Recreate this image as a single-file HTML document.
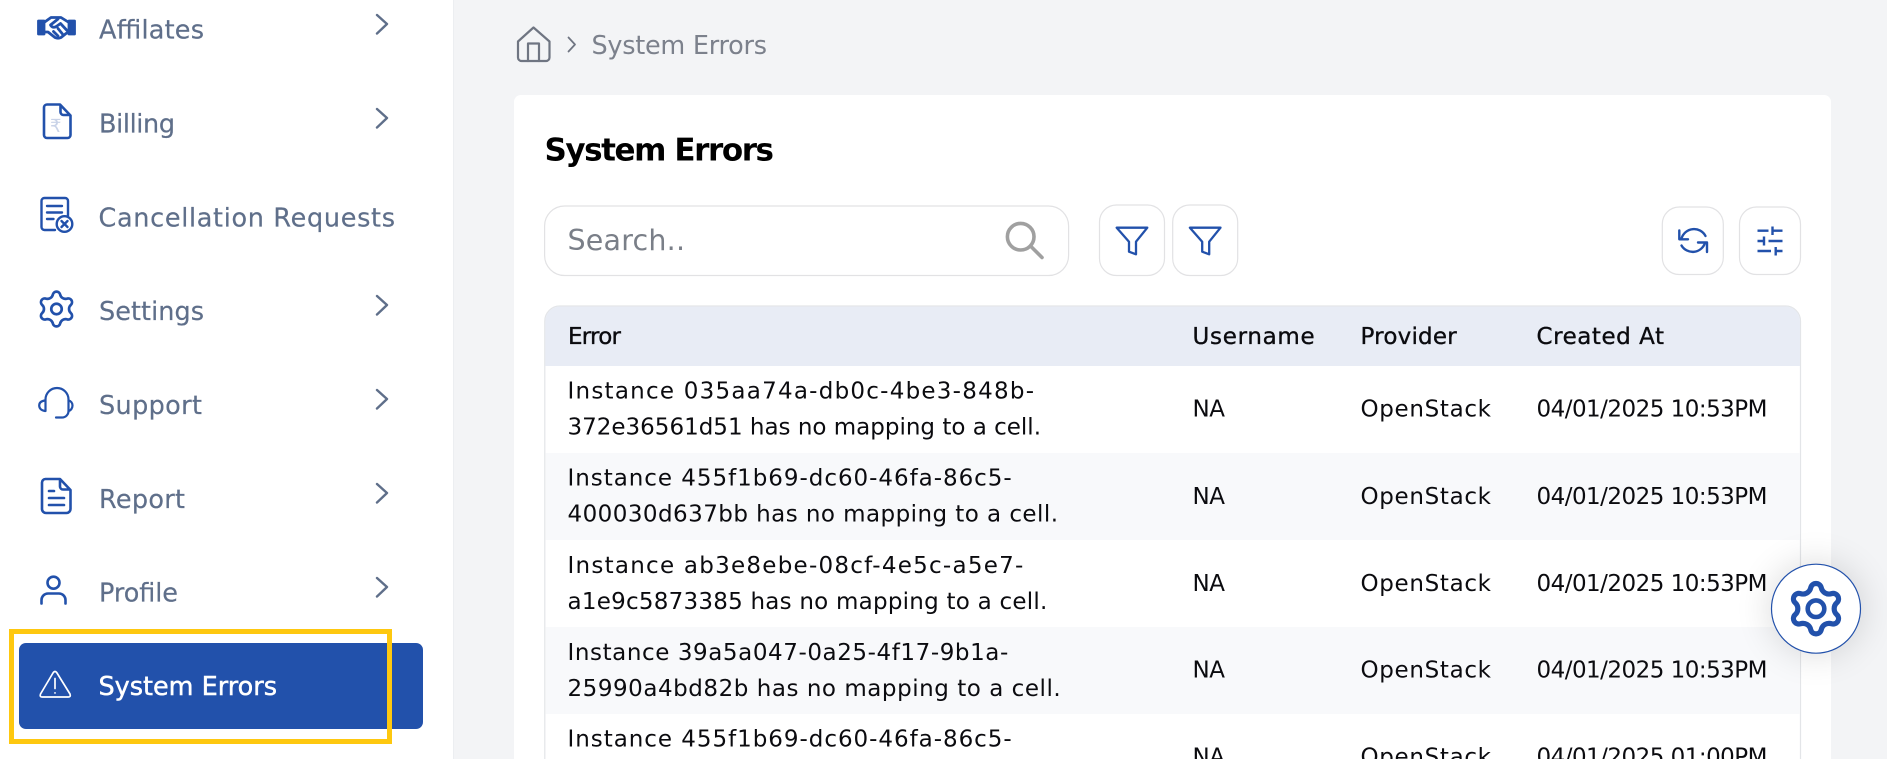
<!DOCTYPE html>
<html lang="en">
<head>
<meta charset="utf-8">
<title>System Errors</title>
<style>
html,body{margin:0;padding:0;width:1887px;height:759px;overflow:hidden;background:#f3f4f6}
svg{display:block}
text{font-family:"DejaVu Sans","Liberation Sans",sans-serif}
.nav{font-size:25.5px;fill:#5f6f8a;stroke:#5f6f8a;stroke-width:.2}
.td{font-size:23px;fill:#0b0b0f}
.th{font-size:23px;fill:#0b0b0f;stroke:#0b0b0f;stroke-width:.35}
.ic{fill:none;stroke:#2251ab;stroke-width:2.6;stroke-linecap:round;stroke-linejoin:round}
.chev{fill:none;stroke:#5f6f8a;stroke-width:2.4;stroke-linecap:round;stroke-linejoin:round}
.btn{fill:#fff;stroke:#e2e2e4;stroke-width:1.2}
</style>
</head>
<body>
<svg width="1887" height="759" viewBox="0 0 1887 759" xmlns="http://www.w3.org/2000/svg">
<defs>
<filter id="sh" x="-60%" y="-60%" width="220%" height="220%"><feGaussianBlur stdDeviation="18"/></filter>
</defs>
<rect width="1887" height="759" fill="#f3f4f6"/>

<!-- sidebar -->
<rect x="0" y="0" width="453" height="759" fill="#fff"/>
<rect x="453" y="0" width="1" height="759" fill="#eceef1"/>

<!-- affiliates icon -->
<g class="ic" style="stroke-width:2.8">
<rect x="38.5" y="21" width="5.5" height="13" fill="#2251ab" stroke="#2251ab"/>
<rect x="69" y="21" width="5.5" height="13" fill="#2251ab" stroke="#2251ab"/>
<path d="M44 22.5L51 17.5H61L69 22.500M44 32H48L55 37.5Q58 39 61 37.5L66 33.5L69 32"/>
<path d="M58 19L50.5 25Q53 29 57 26L60.5 23.5L67.5 31M53.5 31.5L58 36M58 28.5L62.500 34"/>
</g>
<text class="nav" x="99" y="38.7" textLength="105" lengthAdjust="spacing">Affilates</text>
<path class="chev" d="M377 15L387 24L377 33.5"/>

<!-- billing -->
<path class="ic" d="M47 104.5H60L70.5 115.5V135a3 3 0 0 1-3 3H47a3 3 0 0 1-3-3V107.5a3 3 0 0 1 3-3ZM60.5 105V112a3 3 0 0 0 3 3H70"/>
<text x="50" y="132" style="font-size:18px;fill:#c9d3e8">₹</text>
<text class="nav" x="99" y="132.7" textLength="76" lengthAdjust="spacing">Billing</text>
<path class="chev" d="M377 109L387 118L377 127.5"/>

<!-- cancellation -->
<g class="ic" style="stroke-width:2.4">
<path d="M55 230H44.5a3 3 0 0 1-3-3V201a3 3 0 0 1 3-3H65a3 3 0 0 1 3 3V215.5"/>
<path d="M47 206H62M47 212.5H62M47 219H53.5"/>
<circle cx="64.5" cy="224" r="7.8"/>
<path d="M61.5 221L67.5 227M67.5 221L61.5 227"/>
</g>
<text class="nav" x="98.5" y="226.7" textLength="296.5" lengthAdjust="spacing">Cancellation Requests</text>

<!-- settings -->
<g transform="translate(56.5 309) scale(.69)">
<path fill="none" stroke="#2251ab" stroke-width="3.9" stroke-linejoin="round" d="M-5.25-21.06A5.4 5.4 0 0 1 5.25-21.06A8 8 0 0 0 15.61-15.07A5.4 5.4 0 0 1 20.86-5.98A8 8 0 0 0 20.86 5.98A5.4 5.4 0 0 1 15.61 15.07A8 8 0 0 0 5.25 21.06A5.4 5.4 0 0 1-5.25 21.06A8 8 0 0 0-15.61 15.07A5.4 5.4 0 0 1-20.86 5.98A8 8 0 0 0-20.86-5.98A5.4 5.4 0 0 1-15.61-15.07A8 8 0 0 0-5.25-21.06Z"/>
<circle r="7.6" fill="none" stroke="#2251ab" stroke-width="3.9"/>
</g>
<text class="nav" x="99" y="320" textLength="105" lengthAdjust="spacing">Settings</text>
<path class="chev" d="M377 296L387 305L377 314.5"/>

<!-- support -->
<g class="ic" style="stroke-width:2.2">
<path d="M45.5 400V399.5a11.5 11.5 0 0 1 23 0V411a6.5 6.5 0 0 1-6.5 6.5H56"/>
<path d="M45 400.500C41 401 39.200 403 39.200 405.500S41 410.500 45 411"/>
<path d="M45.500 400V411"/>
<path d="M68.500 400.500C71 401 72.500 403 72.500 405.500S71 410.500 68.500 411"/>
</g>
<text class="nav" x="99" y="414" textLength="103" lengthAdjust="spacing">Support</text>
<path class="chev" d="M377 390L387 399L377 408.5"/>

<!-- report -->
<g class="ic">
<path d="M45.5 479H60L70.5 490V509a4 4 0 0 1-4 4H46a4 4 0 0 1-4-4V482.5a3.5 3.5 0 0 1 3.500-3.500ZM60 479.500V486.500a3 3 0 0 0 3 3H70"/>
<path d="M49 491H54M49 498H64M49 505H64"/>
</g>
<text class="nav" x="99" y="508" textLength="86" lengthAdjust="spacing">Report</text>
<path class="chev" d="M377 484L387 493L377 502.500"/>

<!-- profile -->
<g class="ic">
<circle cx="53.500" cy="582.700" r="6"/>
<path d="M41.500 603.500V600a6.500 6.500 0 0 1 6.500-6.500H59a6.500 6.500 0 0 1 6.500 6.500V603.500"/>
</g>
<text class="nav" x="99" y="601.700" textLength="79" lengthAdjust="spacing">Profile</text>
<path class="chev" d="M377 578L387 587L377 596.500"/>

<!-- active -->
<rect x="19" y="643" width="404" height="86" rx="7" fill="#2251ab"/>
<rect x="11.500" y="631.500" width="378" height="110" fill="none" stroke="#fec80f" stroke-width="5"/>
<g fill="none" stroke="#fff" stroke-width="1.700" stroke-linejoin="round" stroke-linecap="round">
<path d="M55 671.500Q54 671.500 53 673L40.500 694Q39.500 697 42 697H68.500Q71 697 70 694L57 673Q56 671.500 55 671.500Z"/>
<path d="M55 678.500V688.500"/>
<path d="M55 692.800V693"/>
</g>
<text x="98.500" y="695" textLength="178.500" lengthAdjust="spacing" style="font-size:25.5px;fill:#fff;stroke:#fff;stroke-width:.45">System Errors</text>

<!-- breadcrumb -->
<g fill="none" stroke="#6f7582" stroke-width="2.200" stroke-linejoin="round" stroke-linecap="round">
<path d="M533.500 27.500L518 41.500V57.500a3.500 3.500 0 0 0 3.500 3.500H546a3.500 3.500 0 0 0 3.500-3.500V41.500Z"/>
<path d="M528 61V43.500H539V61"/>
</g>
<path d="M568.500 37.500L575 44.500L568.500 51.500" fill="none" stroke="#6f7582" stroke-width="1.800" stroke-linecap="round" stroke-linejoin="round"/>
<text x="591.500" y="54" textLength="175.500" lengthAdjust="spacing" style="font-size:25.5px;fill:#7c818c">System Errors</text>

<!-- card -->
<rect x="514" y="95" width="1317" height="680" rx="7" fill="#fff"/>
<text x="544.500" y="160.700" textLength="229.500" lengthAdjust="spacing" style="font-size:31px;font-weight:700;fill:#000">System Errors</text>

<!-- toolbar -->
<rect class="btn" x="544.600" y="206" width="524" height="69.500" rx="20"/>
<text x="567.500" y="250" textLength="117.500" lengthAdjust="spacing" style="font-size:28.500px;fill:#7a7f88">Search..</text>
<g fill="none" stroke="#a0a0a0" stroke-width="3.600" stroke-linecap="round">
<circle cx="1020.700" cy="236.700" r="13.300"/>
<path d="M1030.500 246L1042 257.500"/>
</g>
<rect class="btn" x="1099.500" y="205" width="65" height="70.500" rx="17"/>
<rect class="btn" x="1172.700" y="205" width="65" height="70.500" rx="17"/>
<g fill="none" stroke="#2251ab" stroke-width="2.300" stroke-linejoin="round">
<path d="M1116.700 227.700H1147.300L1136 241.700V254.300L1129 251.700V241.700Z"/>
<path d="M1189.900 227.700H1220.500L1209.200 241.700V254.300L1202.200 251.700V241.700Z"/>
</g>
<rect class="btn" x="1662.300" y="207" width="61" height="67.500" rx="17"/>
<rect class="btn" x="1739.500" y="207" width="61" height="67.500" rx="17"/>
<g fill="none" stroke="#2251ab" stroke-width="2.400" stroke-linecap="round" stroke-linejoin="round">
<path d="M1681.500 238.500A13 13 0 0 1 1705.500 236"/>
<path d="M1679.300 230.500V239.300H1688"/>
<path d="M1705 243A13 13 0 0 1 1681.500 245.500"/>
<path d="M1707 252V242.500H1698"/>
</g>
<g fill="none" stroke="#2251ab" stroke-width="2.400">
<path d="M1757.500 230.700H1768.500M1772.500 226.500V235M1772.500 230.700H1782.500"/>
<path d="M1757.500 241H1764M1764 236.500V245.500M1768.500 241H1782.500"/>
<path d="M1757.500 251H1771M1775.700 247V255.500M1775.700 251H1782.500"/>
</g>

<!-- table -->
<path d="M544.800 759V321a15 15 0 0 1 15-15H1785.500a15 15 0 0 1 15 15V759" fill="#fff" stroke="#e3e5e8" stroke-width="1.200"/>
<path d="M545.400 366V321a14.500 14.500 0 0 1 14.500-14.500H1785.500a14.500 14.500 0 0 1 14.500 14.500V366Z" fill="#e8ecf5"/>
<rect x="545.400" y="453" width="1254.600" height="87" fill="#f8f9fb"/>
<rect x="545.400" y="627" width="1254.600" height="87" fill="#f8f9fb"/>

<text class="th" x="568" y="344" textLength="53" lengthAdjust="spacing">Error</text>
<text class="th" x="1192.500" y="344" textLength="122.200" lengthAdjust="spacing">Username</text>
<text class="th" x="1360.500" y="344" textLength="96.200" lengthAdjust="spacing">Provider</text>
<text class="th" x="1536.500" y="344" textLength="127.500" lengthAdjust="spacing">Created At</text>

<text class="td" x="567.500" y="398.700" textLength="466.500" lengthAdjust="spacing">Instance 035aa74a-db0c-4be3-848b-</text>
<text class="td" x="567.500" y="434.700" textLength="473.500" lengthAdjust="spacing">372e36561d51 has no mapping to a cell.</text>
<text class="td" x="1192.500" y="416.700" textLength="32.500" lengthAdjust="spacing">NA</text>
<text class="td" x="1360.500" y="416.700" textLength="130.500" lengthAdjust="spacing">OpenStack</text>
<text class="td" x="1536.500" y="416.700" textLength="231" lengthAdjust="spacing">04/01/2025 10:53PM</text>

<text class="td" x="567.500" y="485.700" textLength="444.200" lengthAdjust="spacing">Instance 455f1b69-dc60-46fa-86c5-</text>
<text class="td" x="567.500" y="521.400" textLength="490.500" lengthAdjust="spacing">400030d637bb has no mapping to a cell.</text>
<text class="td" x="1192.500" y="504" textLength="32.500" lengthAdjust="spacing">NA</text>
<text class="td" x="1360.500" y="504" textLength="130.500" lengthAdjust="spacing">OpenStack</text>
<text class="td" x="1536.500" y="504" textLength="231" lengthAdjust="spacing">04/01/2025 10:53PM</text>

<text class="td" x="567.500" y="573" textLength="455.800" lengthAdjust="spacing">Instance ab3e8ebe-08cf-4e5c-a5e7-</text>
<text class="td" x="567.500" y="609" textLength="479.800" lengthAdjust="spacing">a1e9c5873385 has no mapping to a cell.</text>
<text class="td" x="1192.500" y="591" textLength="32.500" lengthAdjust="spacing">NA</text>
<text class="td" x="1360.500" y="591" textLength="130.500" lengthAdjust="spacing">OpenStack</text>
<text class="td" x="1536.500" y="591" textLength="231" lengthAdjust="spacing">04/01/2025 10:53PM</text>

<text class="td" x="567.500" y="660" textLength="440.800" lengthAdjust="spacing">Instance 39a5a047-0a25-4f17-9b1a-</text>
<text class="td" x="567.500" y="696" textLength="493.200" lengthAdjust="spacing">25990a4bd82b has no mapping to a cell.</text>
<text class="td" x="1192.500" y="677.700" textLength="32.500" lengthAdjust="spacing">NA</text>
<text class="td" x="1360.500" y="677.700" textLength="130.500" lengthAdjust="spacing">OpenStack</text>
<text class="td" x="1536.500" y="677.700" textLength="231" lengthAdjust="spacing">04/01/2025 10:53PM</text>

<text class="td" x="567.500" y="746.700" textLength="444.200" lengthAdjust="spacing">Instance 455f1b69-dc60-46fa-86c5-</text>
<text class="td" x="1192.500" y="764.500" textLength="32.500" lengthAdjust="spacing">NA</text>
<text class="td" x="1360.500" y="764.500" textLength="130.500" lengthAdjust="spacing">OpenStack</text>
<text class="td" x="1536.500" y="764.500" textLength="231" lengthAdjust="spacing">04/01/2025 01:00PM</text>

<!-- floating settings -->
<circle cx="1816" cy="608.700" r="46" fill="#000" opacity=".14" filter="url(#sh)"/>
<circle cx="1816" cy="608.700" r="44.500" fill="#fff" stroke="#2251ab" stroke-width="1.200"/>
<g transform="translate(1816 608.700)">
<path fill="none" stroke="#2251ab" stroke-width="5.200" stroke-linejoin="round" d="M-5.25-21.06A5.4 5.4 0 0 1 5.25-21.06A8 8 0 0 0 15.61-15.07A5.4 5.4 0 0 1 20.86-5.98A8 8 0 0 0 20.86 5.98A5.4 5.4 0 0 1 15.61 15.07A8 8 0 0 0 5.25 21.06A5.4 5.4 0 0 1-5.25 21.06A8 8 0 0 0-15.61 15.07A5.4 5.4 0 0 1-20.86 5.98A8 8 0 0 0-20.86-5.98A5.4 5.4 0 0 1-15.61-15.07A8 8 0 0 0-5.25-21.06Z"/>
<circle r="8.300" fill="none" stroke="#2251ab" stroke-width="4.600"/>
</g>
</svg>
</body>
</html>
